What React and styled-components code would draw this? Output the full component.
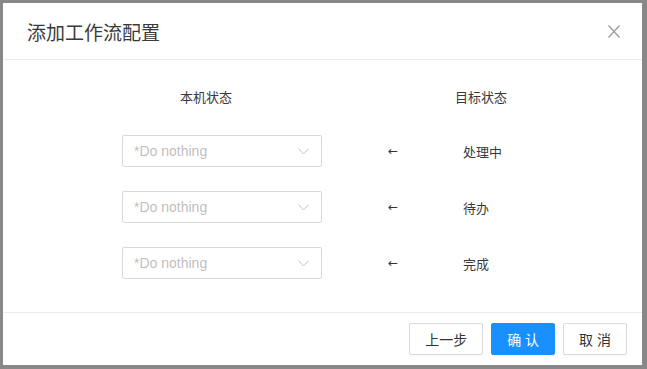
import React from 'react';
import styled, { createGlobalStyle } from 'styled-components';

const GlobalStyle = createGlobalStyle`
  html, body {
    margin: 0;
    padding: 0;
    background: #888888;
  }
  body {
    font-family: "Liberation Sans", "Noto Sans CJK SC", sans-serif;
  }
`;

const Backdrop = styled.div`
  width: 647px;
  height: 369px;
  padding: 3px 5px 4px 3px;
  box-sizing: border-box;
  background: #888888;
`;

const Modal = styled.div`
  width: 639px;
  height: 362px;
  background: #fff;
  display: flex;
  flex-direction: column;
`;

const Header = styled.div`
  height: 56px;
  flex: none;
  display: flex;
  align-items: center;
  justify-content: space-between;
  padding: 0 22px 0 24px;
  border-bottom: 1px solid #ebebeb;
`;

const Title = styled.h1`
  margin: 0;
  font-size: 19px;
  font-weight: 400;
  color: #3a3a3a;
  padding-top: 1px;
`;

const CloseButton = styled.button`
  background: none;
  border: none;
  padding: 0;
  width: 12px;
  height: 13px;
  display: flex;
  cursor: pointer;
`;

const Body = styled.div`
  flex: 1;
  padding: 24px 0 0 119px;
  border-bottom: 1px solid #ebebeb;
`;

const HeadRow = styled.div`
  display: flex;
  height: 24px;
  align-items: center;
  margin-bottom: 27px;
`;

const HeadCell = styled.div`
  width: 120px;
  text-align: center;
  font-size: 13px;
  color: #3a3a3a;
  margin-left: ${(p) => p.$offset}px;
`;

const Rows = styled.div`
  display: flex;
  flex-direction: column;
  gap: 24px;
`;

const Row = styled.div`
  display: flex;
  align-items: center;
  height: 32px;
`;

const Select = styled.div`
  width: 200px;
  height: 32px;
  box-sizing: border-box;
  border: 1px solid #d9d9d9;
  border-radius: 2px;
  display: flex;
  align-items: center;
  justify-content: space-between;
  padding: 0 12px 0 11px;
  font-size: 14px;
  color: #bfbfbf;
`;

const Arrow = styled.div`
  width: 100px;
  margin-left: 21px;
  text-align: center;
  font-family: "DejaVu Sans", sans-serif;
  font-size: 12px;
  color: #333;
`;

const Target = styled.div`
  padding-left: 20px;
  font-size: 13px;
  color: #3a3a3a;
`;

const Footer = styled.div`
  height: 52px;
  flex: none;
  box-sizing: border-box;
  display: flex;
  align-items: flex-start;
  justify-content: flex-end;
  gap: 8px;
  padding: 10px 15px 0 0;
`;

const Button = styled.button`
  height: 32px;
  padding: 0 15px;
  font-family: inherit;
  font-size: 14px;
  border-radius: 2px;
  border: 1px solid ${(p) => (p.$primary ? '#1890ff' : '#d9d9d9')};
  background: ${(p) => (p.$primary ? '#1890ff' : '#fff')};
  color: ${(p) => (p.$primary ? '#fff' : '#333')};
  box-shadow: 0 2px 0 rgba(0, 0, 0, 0.015);
  cursor: pointer;
  white-space: pre;
`;

const rows = ['处理中', '待办', '完成'];

function Chevron() {
  return (
    <svg width="11" height="7" viewBox="0 0 11 7">
      <path d="M0.5 0.5 L5.5 6 L10.5 0.5" fill="none" stroke="#c4c4c4" strokeWidth="1" />
    </svg>
  );
}

export default function App() {
  return (
    <>
      <GlobalStyle />
      <Backdrop>
        <Modal>
          <Header>
            <Title>添加工作流配置</Title>
            <CloseButton aria-label="Close">
              <svg width="12" height="13" viewBox="0 0 12 13">
                <path d="M0.5 0.5 L11.5 12.5 M11.5 0.5 L0.5 12.5" stroke="#999" strokeWidth="1.2" />
              </svg>
            </CloseButton>
          </Header>
          <Body>
            <HeadRow>
              <HeadCell $offset={24}>本机状态</HeadCell>
              <HeadCell $offset={155}>目标状态</HeadCell>
            </HeadRow>
            <Rows>
              {rows.map((r) => (
                <Row key={r}>
                  <Select>
                    <span>*Do nothing</span>
                    <Chevron />
                  </Select>
                  <Arrow>←</Arrow>
                  <Target>{r}</Target>
                </Row>
              ))}
            </Rows>
          </Body>
          <Footer>
            <Button>上一步</Button>
            <Button $primary>{'确 认'}</Button>
            <Button>{'取 消'}</Button>
          </Footer>
        </Modal>
      </Backdrop>
    </>
  );
}
